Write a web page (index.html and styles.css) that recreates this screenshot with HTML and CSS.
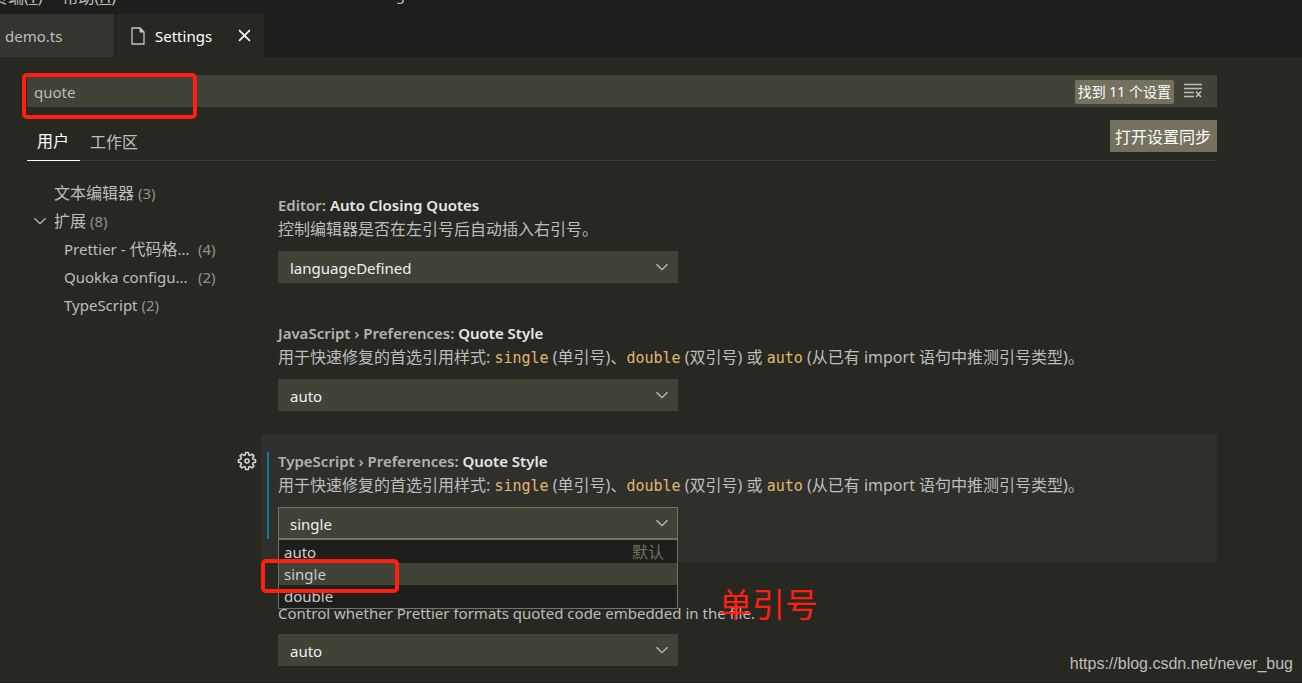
FILE: index.html
```html
<!DOCTYPE html>
<html lang="zh-CN">
<head>
<meta charset="utf-8">
<title>Settings</title>
<link rel="stylesheet" href="styles.css">
</head>
<body>
<svg class="sprite" aria-hidden="true">
  <symbol id="chevron" viewBox="0 0 16 16"><path d="M2.500 5.200 8 10.700l5.500-5.500" fill="none" stroke="currentColor" stroke-width="1.300"/></symbol>
</svg>
<div class="workbench">
  <header class="titlebar">
    <nav class="menu"><span>终端(<u>T</u>)</span><span>帮助(<u>H</u>)</span></nav>
    <span class="window-title">Settings</span>
  </header>
  <div class="tabs" role="tablist">
    <button class="tab" role="tab">demo.ts</button>
    <div class="tab tab-active" role="tab" aria-selected="true">
      <svg class="file-icon" viewBox="0 0 14 18" aria-hidden="true"><path d="M1 1h8l4 4v12H1z" fill="none" stroke="currentColor" stroke-width="1.300"/><path d="M8.500.5v5h5z" fill="currentColor"/></svg>
      <span>Settings</span>
      <button class="icon-button" aria-label="关闭"><svg class="close-icon" viewBox="0 0 12 12"><path d="m1 1 10 10M11 1 1 11" stroke="currentColor" stroke-width="1.500"/></svg></button>
    </div>
  </div>
  <main class="editor">
    <div class="search">
      <input class="search-input" type="text" value="quote" aria-label="搜索设置">
      <span class="badge">找到 11 个设置</span>
      <button class="icon-button clear" aria-label="清除">
        <svg class="clear-icon" viewBox="0 0 20 16"><path d="M1 1.500h18M1 5.500h18M1 9.500h10M1 13.500h10" fill="none" stroke="currentColor" stroke-width="1.300"/><path d="m13 8.500 5 5.500M18 8.500 13 14" fill="none" stroke="currentColor" stroke-width="1.600"/></svg>
      </button>
    </div>
    <div class="scopes">
      <button class="scope scope-active">用户</button>
      <button class="scope">工作区</button>
      <button class="sync">打开设置同步</button>
    </div>
    <div class="columns">
      <ul class="toc">
        <li>文本编辑器 <span class="count">(3)</span></li>
        <li class="group"><svg class="chevron" aria-hidden="true"><use href="#chevron"/></svg>扩展 <span class="count">(8)</span></li>
        <li class="child"><span class="label"><span class="latin">Prettier - </span>代码格<span class="latin">...</span></span><span class="count">(4)</span></li>
        <li class="child"><span class="label latin">Quokka configu...</span><span class="count">(2)</span></li>
        <li class="child"><span class="latin">TypeScript</span> <span class="count">(2)</span></li>
      </ul>
      <div class="settings">
        <section class="setting">
          <div class="body">
            <h2>Editor: <label for="closing">Auto Closing Quotes</label></h2>
            <p>控制编辑器是否在左引号后自动插入右引号。</p>
            <div class="picker"><select id="closing"><option>languageDefined</option></select><svg class="chevron" aria-hidden="true"><use href="#chevron"/></svg></div>
          </div>
        </section>
        <section class="setting">
          <div class="body">
            <h2>JavaScript › Preferences: <label for="js-quote">Quote Style</label></h2>
            <p>用于快速修复的首选引用样式: <code>single</code> (单引号)、<code>double</code> (双引号) 或 <code>auto</code> (从已有 import 语句中推测引号类型)。</p>
            <div class="picker"><select id="js-quote"><option>auto</option></select><svg class="chevron" aria-hidden="true"><use href="#chevron"/></svg></div>
          </div>
        </section>
        <section class="setting setting-focused">
          <button class="icon-button gear" aria-label="更多操作">
            <svg class="gear-icon" viewBox="0 0 20 20" fill="none" stroke="currentColor"><path stroke-width="1.600" stroke-linejoin="round" d="M8.700 1.500h2.600l.5 2.400 1.200.5 2.100-1.300 1.800 1.800-1.300 2.100.5 1.200 2.400.5v2.600l-2.400.5-.5 1.200 1.300 2.100-1.800 1.800-2.100-1.300-1.200.5-.5 2.400H8.700l-.5-2.400-1.200-.5-2.100 1.300-1.800-1.800L4.400 13l-.5-1.200-2.400-.5V8.700l2.400-.5L4.400 7 3.100 4.900l1.800-1.800L7 4.400l1.200-.5z"/><circle cx="10" cy="10" r="2" stroke-width="1.600"/></svg>
          </button>
          <div class="body">
            <h2>TypeScript › Preferences: <label for="ts-quote">Quote Style</label></h2>
            <p>用于快速修复的首选引用样式: <code>single</code> (单引号)、<code>double</code> (双引号) 或 <code>auto</code> (从已有 import 语句中推测引号类型)。</p>
            <div class="picker picker-open">
              <select id="ts-quote"><option>single</option></select><svg class="chevron" aria-hidden="true"><use href="#chevron"/></svg>
              <ul class="options" role="listbox">
                <li role="option">auto<span class="default">默认</span></li>
                <li class="chosen" role="option" aria-selected="true">single</li>
                <li role="option">double</li>
              </ul>
              <div class="mark mark-option"></div>
            </div>
          </div>
        </section>
        <section class="setting">
          <div class="body body-untitled">
            <p class="plain">Control whether Prettier formats quoted code embedded in the file.<span class="note">单引号</span></p>
            <div class="picker"><select aria-label="Prettier"><option>auto</option></select><svg class="chevron" aria-hidden="true"><use href="#chevron"/></svg></div>
          </div>
        </section>
      </div>
    </div>
    <div class="mark mark-search"></div>
    <div class="watermark">https://blog.csdn.net/never_bug</div>
  </main>
</div>
</body>
</html>
```
FILE: styles.css
```css
* { box-sizing: border-box; }

body {
  margin: 0;
  background: #272822;
  color: #bebeba;
  font: 16px/24px "Noto Sans", "Noto Sans CJK SC", sans-serif;
}

button, input, select {
  margin: 0;
  padding: 0;
  border: 0;
  border-radius: 0;
  background: none;
  color: inherit;
  font: inherit;
}

ul, p, h2 { margin: 0; padding: 0; list-style: none; }

.sprite { display: none; }

.latin, .plain { font-size: 15px; }

.workbench {
  display: flex;
  flex-direction: column;
  height: 100vh;
  overflow: hidden;
  border-bottom: 1px solid #1e1f1c;
}

.titlebar {
  display: flex;
  flex: none;
  align-items: flex-end;
  height: 14px;
  padding-bottom: 7px;
  overflow: hidden;
  background: #1e1f1c;
  line-height: 20px;
}

.menu { display: flex; gap: 20px; margin-left: -8px; }
.window-title { margin-left: 239px; padding-bottom: 3px; font-size: 15px; }

.tabs {
  display: flex;
  flex: none;
  height: 43px;
  background: #1e1f1c;
  font-size: 15px;
}

.tab {
  display: flex;
  align-items: center;
  width: 115px;
  padding: 0 5px;
  border-right: 1px solid #1e1f1c;
  background: #34352f;
}

.tab-active {
  width: 149px;
  gap: 10px;
  padding: 0 13px 0 16px;
  border: 0;
  background: #272822;
  color: #fff;
}

.icon-button { display: flex; align-items: center; justify-content: center; }
.file-icon { width: 14px; height: 18px; color: #c5c5c5; }
.tab .icon-button { margin-left: auto; }
.close-icon { width: 13px; height: 13px; }
.chevron { width: 16px; height: 16px; }

.editor {
  position: relative;
  flex: 1;
  min-height: 0;
  padding: 18px 85px 0 27px;
}

.search {
  display: flex;
  align-items: center;
  height: 32px;
  padding-right: 14px;
  background: #414339;
}

.search-input {
  flex: 1;
  min-width: 0;
  padding: 2px 7px 0;
  font-size: 15px;
  outline: 0;
}

.badge {
  margin-top: 2px;
  padding: 0 3px;
  border-radius: 2px;
  background: #75715e;
  color: #fff;
  font-size: 14px;
}

.clear { margin-left: 9px; }
.clear-icon { width: 20px; height: 16px; }

.scopes {
  display: flex;
  align-items: flex-start;
  gap: 10px;
  height: 54px;
  padding-top: 13px;
  border-bottom: 1px solid #3d3e3b;
}

.scope { height: 41px; padding-top: 2px; }
.scope-active { padding: 2px 11px 0 10px; border-bottom: 1px solid #fff; color: #fff; }
.sync { height: 32px; margin-left: auto; padding: 2px 6px 0 5px; background: #75715e; color: #fff; }

.columns { display: grid; grid-template-columns: 210px minmax(0, 1fr); padding-top: 17px; }

.toc { padding: 1px 0 0 27px; line-height: 28px; }
.toc li { display: flex; gap: 4px; }
.group .chevron { margin: 6px 2px 0 -22px; }
.toc .child { padding-left: 10px; }
.label { width: 130px; white-space: nowrap; }
.count { color: #92928c; font-size: 15px; }

.setting { display: grid; grid-template-columns: 24px minmax(0, 1fr); }
.gear { align-self: start; justify-self: start; height: 22px; margin-top: 16px; }
.gear-icon { width: 20px; height: 20px; color: #d4d4d4; }

.body {
  position: relative;
  grid-column: 2;
  padding: 16px 17px 23px;
}

.body-untitled { padding-top: 39px; }
.setting-focused .body { background: #2f302b; }

.setting-focused .body::before {
  position: absolute;
  top: 18px;
  bottom: 23px;
  left: 6px;
  width: 2px;
  background: #0c7d9d;
  content: "";
}

h2 { color: #b4b4b0; font-size: 15px; font-weight: 600; line-height: 23px; }
h2 label { color: #e7e7e7; }
p { height: 24px; white-space: nowrap; }

code { color: #e0b86c; font: 15px/24px "DejaVu Sans Mono", monospace; }

.picker { position: relative; width: 400px; max-width: 100%; height: 32px; margin-top: 10px; }
.body-untitled .picker { margin-top: 9px; }

.picker select {
  width: 100%;
  height: 100%;
  padding: 2px 32px 0 12px;
  appearance: none;
  background: #414339;
  color: #f0f0f0;
  font-size: 15px;
}

.picker .chevron { position: absolute; top: 8px; right: 8px; pointer-events: none; }
.picker-open select { padding: 2px 31px 0 11px; border: 1px solid #75715e; }

.options {
  position: absolute;
  z-index: 1;
  top: 100%;
  left: 0;
  width: 100%;
  padding: 1px 0;
  border: 1px solid #75715e;
  background: #1e1f1c;
  color: #ccc;
  font-size: 15px;
  line-height: 23px;
}

.options li { display: flex; justify-content: space-between; height: 22px; padding: 0 13px 0 5px; }
.options .chosen { background: #414339; }
.default { color: #75715e; font-size: 16px; }

.mark { position: absolute; z-index: 2; border: 4px solid #ff1e10; border-radius: 5px; }
.mark-search { top: 16px; left: 22px; width: 175px; height: 46px; }
.mark-option { top: 52px; left: -17px; width: 138px; height: 34px; }

.note {
  position: absolute;
  top: 21px;
  left: 458px;
  color: #ff1e10;
  font: 33px/40px "Noto Sans CJK SC", sans-serif;
}

.watermark {
  position: absolute;
  right: 9px;
  bottom: 6px;
  font: 16px/24px "Liberation Sans", sans-serif;
}
```
